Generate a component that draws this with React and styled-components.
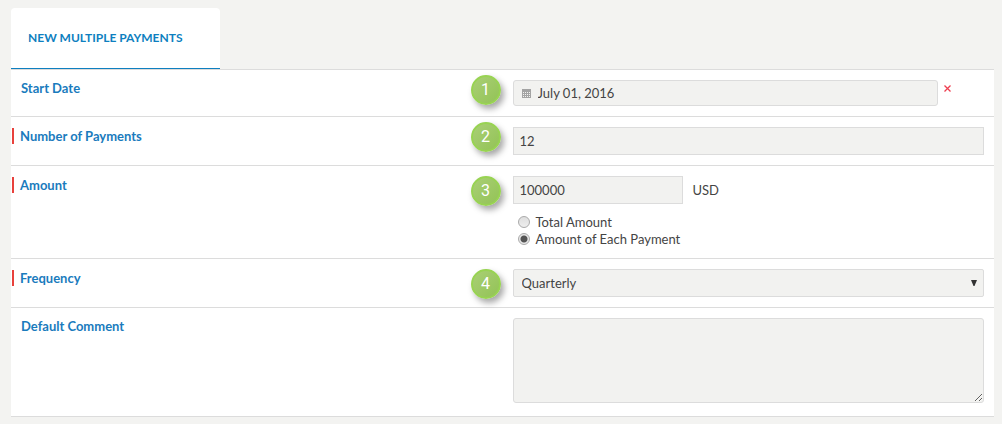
import { useState } from 'react';
import styled, { createGlobalStyle, css } from 'styled-components';

// Styled Components
const GlobalStyle = createGlobalStyle`
    * {
        box-sizing: border-box;
    }

    body {
        margin: 0;
        background: #f3f3f1;
        color: #444;
        font-family: Lato, "Open Sans", sans-serif;
        font-size: 13px;
    }

    input, select, textarea, button {
        font: inherit;
        color: inherit;
    }
`;

const Page = styled.main`
    padding: 8px 8px 8px 11px;
`;

const Tabs = styled.div`
    display: flex;
    border-bottom: 1px solid #dcdcdc;
`;

const Tab = styled.h1`
    margin: 0;
    padding: 19px 37px 20px 17px;
    border-bottom: 1px solid #0e7fc0;
    border-radius: 4px 4px 0 0;
    background: #fff;
    color: #0e7fc0;
    font-size: 12px;
    font-weight: 700;
    line-height: 21px;
    text-transform: uppercase;
`;

const Form = styled.form`
    background: #fff;
`;

const Row = styled.div`
    display: grid;
    grid-template-columns: 1fr 1fr;
    border-bottom: 1px solid #dcdcdc;
`;

const LabelCell = styled.div`
    display: flex;
    align-items: flex-start;
    justify-content: space-between;
    padding: 0 2px 0 1px;
`;

const Label = styled.label`
    margin-top: 10px;
    padding-left: 9px;
    color: #1a7bbd;
    font-weight: 700;
    line-height: 17px;

    ${({ $required }) => $required && css`
        margin-top: 11px;
        padding-left: 6px;
        border-left: 2px solid #e8413c;
        line-height: 16px;
    `}
`;

const Badge = styled.span`
    width: 30px;
    height: 30px;
    margin-top: ${({ $low }) => ($low ? '10px' : '5px')};
    border: 2px solid #98d352;
    border-radius: 50%;
    background: linear-gradient(135deg, #a9cf75, #93c356);
    box-shadow: 3px 4px 6px rgba(0, 0, 0, 0.35);
    color: #fff;
    font-family: Roboto, sans-serif;
    font-size: 16px;
    line-height: 25px;
    text-align: center;
`;

const FieldCell = styled.div`
    padding: 10px;
`;

const Line = styled.div`
    display: flex;
    align-items: ${({ $top }) => ($top ? 'flex-start' : 'center')};
`;

const field = css`
    display: block;
    width: 100%;
    border: 1px solid #dcdcdc;
    background: #f2f2f0;
    outline: none;
`;

const TextInput = styled.input`
    ${field}
    width: ${({ $short }) => ($short ? '170px' : '100%')};
    height: 28px;
    padding: 0 6px;
`;

const DateBox = styled.div`
    ${field}
    display: flex;
    flex: 1;
    align-items: center;
    gap: 7px;
    height: 26px;
    padding: 0 8px;
    border-radius: 3px;
`;

const DateInput = styled.input`
    flex: 1;
    min-width: 0;
    padding: 0;
    border: 0;
    background: none;
    outline: none;
`;

const ClearButton = styled.button`
    width: 46px;
    height: 16px;
    padding: 0 0 0 6px;
    border: 0;
    background: none;
    line-height: 0;
    text-align: left;
    cursor: pointer;
`;

const Currency = styled.span`
    margin-left: 10px;
`;

const Options = styled.div`
    padding: 10px 0 0 5px;
`;

const Option = styled.label`
    display: flex;
    align-items: center;
    gap: 6px;
    line-height: 17px;
`;

const Radio = styled.input`
    appearance: none;
    width: 12px;
    height: 12px;
    margin: 0 0 2px;
    border: 1px solid #aaa;
    border-radius: 50%;
    background: linear-gradient(#dedede, #eee);

    &:checked {
        background: radial-gradient(circle, #555 0 3px, #e8e8e8 4px);
    }
`;

const SelectBox = styled.div`
    display: grid;
    align-items: center;

    > * {
        grid-area: 1 / 1;
    }
`;

const Select = styled.select`
    ${field}
    appearance: none;
    height: 28px;
    padding: 0 24px 0 8px;
    border-radius: 2px;
`;

const Arrow = styled.svg`
    justify-self: end;
    margin-right: 7px;
    pointer-events: none;
`;

const TextArea = styled.textarea`
    ${field}
    height: 85px;
    margin-bottom: 3px;
    padding: 5px;
    border-radius: 3px;
    resize: vertical;
`;

const CalendarIcon = () => (
    <svg width="9" height="9" viewBox="0 0 9 9" shapeRendering="crispEdges" aria-hidden="true">
        <path fill="#a3a3a3" d="M0 0h9v9H0z" />
        <path
            stroke="#f2f2f0"
            strokeDasharray="1 1"
            d="M1 3.5h7M1 5.5h7M1 7.5h7"
        />
    </svg>
);

const FormRow = ({ id, label, step, low, required, children }) => (
    <Row>
        <LabelCell>
            <Label htmlFor={id} $required={required}>{label}</Label>
            {step && <Badge $low={low}>{step}</Badge>}
        </LabelCell>
        <FieldCell>{children}</FieldCell>
    </Row>
);

const App = () => {
    const [date, setDate] = useState('July 01, 2016');
    const [count, setCount] = useState('12');
    const [amount, setAmount] = useState('100000');
    const [amountType, setAmountType] = useState('each');
    const [frequency, setFrequency] = useState('Quarterly');

    return (
        <Page>
            <GlobalStyle />
            <Tabs>
                <Tab>New Multiple Payments</Tab>
            </Tabs>
            <Form>
                <FormRow id="start" label="Start Date" step={1}>
                    <Line $top>
                        <DateBox>
                            <CalendarIcon />
                            <DateInput id="start" value={date} onChange={(e) => setDate(e.target.value)} />
                        </DateBox>
                        <ClearButton type="button" aria-label="Clear date" onClick={() => setDate('')}>
                            <svg width="7" height="7" viewBox="0 0 7 7">
                                <path stroke="#ee3f50" strokeWidth="1.3" d="M.5.5l6 6M6.5.5l-6 6" />
                            </svg>
                        </ClearButton>
                    </Line>
                </FormRow>
                <FormRow id="count" label="Number of Payments" step={2} required>
                    <TextInput id="count" value={count} onChange={(e) => setCount(e.target.value)} />
                </FormRow>
                <FormRow id="amount" label="Amount" step={3} low required>
                    <Line>
                        <TextInput id="amount" $short value={amount} onChange={(e) => setAmount(e.target.value)} />
                        <Currency>USD</Currency>
                    </Line>
                    <Options>
                        <Option>
                            <Radio
                                type="radio"
                                name="amountType"
                                checked={amountType === 'total'}
                                onChange={() => setAmountType('total')}
                            />
                            Total Amount
                        </Option>
                        <Option>
                            <Radio
                                type="radio"
                                name="amountType"
                                checked={amountType === 'each'}
                                onChange={() => setAmountType('each')}
                            />
                            Amount of Each Payment
                        </Option>
                    </Options>
                </FormRow>
                <FormRow id="frequency" label="Frequency" step={4} low required>
                    <SelectBox>
                        <Select id="frequency" value={frequency} onChange={(e) => setFrequency(e.target.value)}>
                            <option>Monthly</option>
                            <option>Quarterly</option>
                            <option>Annually</option>
                        </Select>
                        <Arrow width="6" height="6" viewBox="0 0 6 6">
                            <path fill="#333" d="M0 0h6L3.5 6h-1z" />
                        </Arrow>
                    </SelectBox>
                </FormRow>
                <FormRow id="comment" label="Default Comment">
                    <TextArea id="comment" />
                </FormRow>
            </Form>
        </Page>
    );
};

export default App;
